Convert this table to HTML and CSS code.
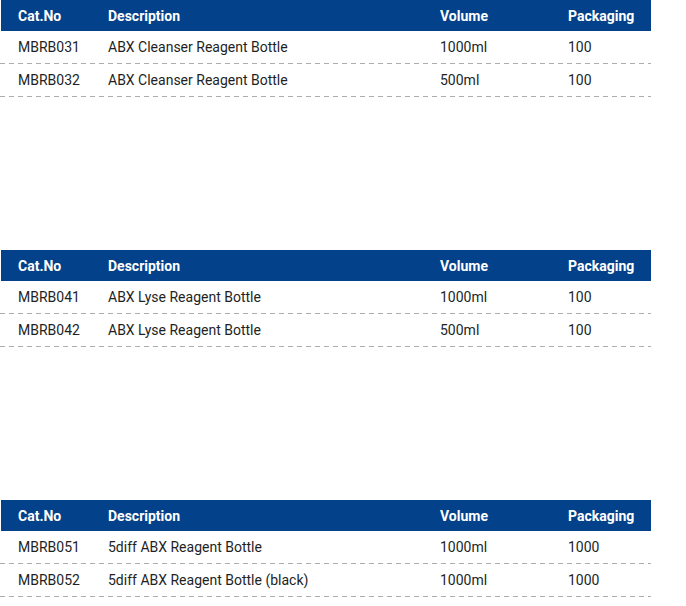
FILE: index.html
```html
<!DOCTYPE html>
<html>
<head>
<meta charset="utf-8">
<link rel="stylesheet" href="styles.css">
</head>
<body>
<div class="page">
  <div class="tbl">
    <div class="row head"><span>Cat.No</span><span>Description</span><span>Volume</span><span>Packaging</span></div>
    <div class="row"><span>MBRB031</span><span>ABX Cleanser Reagent Bottle</span><span>1000ml</span><span>100</span></div>
    <div class="row"><span>MBRB032</span><span>ABX Cleanser Reagent Bottle</span><span>500ml</span><span>100</span></div>
  </div>
  <div class="tbl">
    <div class="row head"><span>Cat.No</span><span>Description</span><span>Volume</span><span>Packaging</span></div>
    <div class="row"><span>MBRB041</span><span>ABX Lyse Reagent Bottle</span><span>1000ml</span><span>100</span></div>
    <div class="row"><span>MBRB042</span><span>ABX Lyse Reagent Bottle</span><span>500ml</span><span>100</span></div>
  </div>
  <div class="tbl">
    <div class="row head"><span>Cat.No</span><span>Description</span><span>Volume</span><span>Packaging</span></div>
    <div class="row"><span>MBRB051</span><span>5diff ABX Reagent Bottle</span><span>1000ml</span><span>1000</span></div>
    <div class="row"><span>MBRB052</span><span>5diff ABX Reagent Bottle (black)</span><span>1000ml</span><span>1000</span></div>
  </div>
</div>
</body>
</html>
```

FILE: styles.css
```css
html, body {
  margin: 0;
  padding: 0;
  background: #fff;
}
.page {
  width: 651px;
  display: flex;
  flex-direction: column;
  gap: 153px;
  font-family: Roboto, "Liberation Sans", sans-serif;
  font-size: 14px;
  color: #231f1f;
}
.row {
  display: grid;
  grid-template-columns: 90px 332px 128px 1fr;
  align-items: center;
  height: 32px;
  padding-left: 18px;
  padding-bottom: 1px;
  background-image: repeating-linear-gradient(to right, #adadad 0 5px, transparent 5px 9px);
  background-size: 100% 1px;
  background-repeat: no-repeat;
  background-position: left bottom;
}
.row.head {
  height: 31px;
  padding-bottom: 0;
  margin-left: 1px;
  padding-left: 17px;
  background: #03418a;
  color: #fff;
  font-weight: 700;
}
```
